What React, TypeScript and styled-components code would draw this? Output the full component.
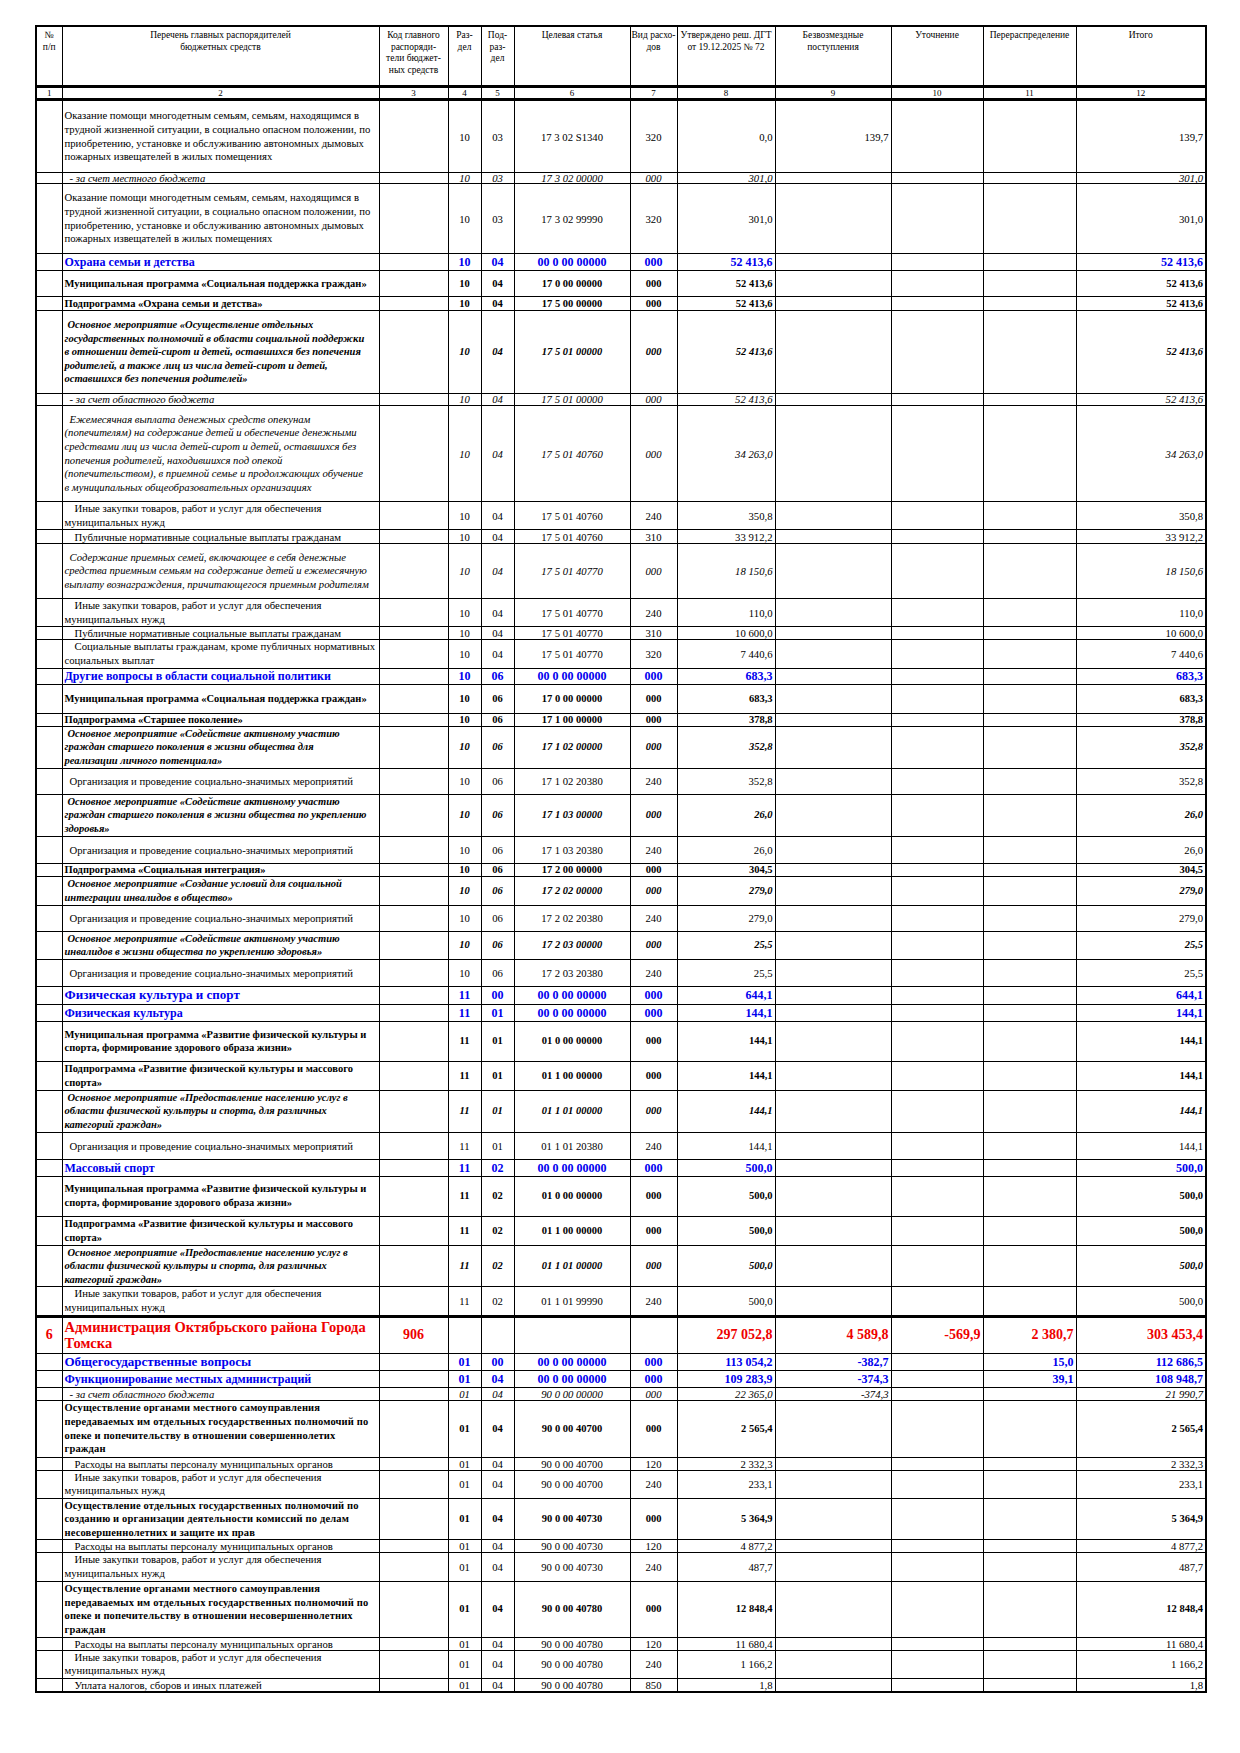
import React from "react";
import styled, { createGlobalStyle, css } from "styled-components";

const GlobalStyle = createGlobalStyle`
  html, body {
    margin: 0;
    padding: 0;
    background: #fff;
  }
  body {
    font-family: "Liberation Serif", "Times New Roman", serif;
    color: #000;
  }
`;

type Kind = "plain" | "italic" | "desc" | "bold" | "boldItalic" | "blue" | "red";

interface Row {
  kind: Kind;
  h: number;
  text: string[];
  indent?: number;
  size?: number;
  spaced?: boolean;
  num?: string;
  code?: string;
  c: [string, string, string, string];
  v: [string, string, string, string, string];
}

const COLS = [26, 317, 69, 33, 33, 116, 47, 98, 116, 92, 93, 130];

const HEAD = [
  ["№", "п/п"],
  ["Перечень главных распорядителей", "бюджетных средств"],
  ["Код главного", "распоряди-", "тели бюджет-", "ных средств"],
  ["Раз-", "дел"],
  ["Под-", "раз-", "дел"],
  ["Целевая статья"],
  ["Вид расхо-", "дов"],
  ["Утверждено реш. ДГТ", "от 19.12.2025 № 72"],
  ["Безвозмездные", "поступления"],
  ["Уточнение"],
  ["Перераспределение"],
  ["Итого"],
];

const helpLines = [
  "Оказание помощи многодетным семьям, семьям, находящимся в",
  "трудной жизненной ситуации, в социально опасном положении, по",
  "приобретению, установке и обслуживанию автономных дымовых",
  "пожарных извещателей в жилых помещениях",
];
const purchase = ["Иные закупки товаров, работ и услуг для обеспечения", "муниципальных нужд"];
const events = ["Организация и проведение социально-значимых мероприятий"];
const publicPay = ["Публичные нормативные социальные выплаты гражданам"];
const staff = ["Расходы на выплаты персоналу муниципальных органов"];
const sportProgram = [
  "Муниципальная программа «Развитие физической культуры и",
  "спорта, формирование здорового образа жизни»",
];
const sportSub = ["Подпрограмма «Развитие физической культуры и массового", "спорта»"];
const sportMain = [
  "Основное мероприятие «Предоставление населению услуг в",
  "области физической культуры и спорта, для различных",
  "категорий граждан»",
];
const guardLines = (who: string) => [
  "Осуществление органами местного самоуправления",
  "передаваемых им отдельных государственных полномочий по",
  `опеке и попечительству в отношении ${who}`,
  "граждан",
];

const mk = (
  kind: Kind,
  h: number,
  text: string[],
  c: [string, string, string, string],
  v8: string,
  extra: Partial<Row> = {}
): Row => ({
  kind,
  h,
  text,
  c,
  v: [v8, "", "", "", v8],
  ...extra,
});

const ROWS: Row[] = [
  mk("plain", 73, helpLines, ["10", "03", "17 3 02 S1340", "320"], "0,0", { v: ["0,0", "139,7", "", "", "139,7"] }),
  mk("italic", 11, ["- за счет местного бюджета"], ["10", "03", "17 3 02 00000", "000"], "301,0", { indent: 5 }),
  mk("plain", 70, helpLines, ["10", "03", "17 3 02 99990", "320"], "301,0"),
  mk("blue", 17, ["Охрана семьи и детства"], ["10", "04", "00 0 00 00000", "000"], "52 413,6"),
  mk("bold", 26, ["Муниципальная программа «Социальная поддержка граждан»"], ["10", "04", "17 0 00 00000", "000"], "52 413,6"),
  mk("bold", 14, ["Подпрограмма «Охрана семьи и детства»"], ["10", "04", "17 5 00 00000", "000"], "52 413,6"),
  mk(
    "boldItalic",
    83,
    [
      "Основное мероприятие «Осуществление отдельных",
      "государственных полномочий в области социальной поддержки",
      "в отношении детей-сирот и детей, оставшихся без попечения",
      "родителей, а также лиц из числа детей-сирот и детей,",
      "оставшихся без попечения родителей»",
    ],
    ["10", "04", "17 5 01 00000", "000"],
    "52 413,6",
    { indent: 3 }
  ),
  mk("italic", 12, ["- за счет областного бюджета"], ["10", "04", "17 5 01 00000", "000"], "52 413,6", { indent: 5 }),
  mk(
    "desc",
    96,
    [
      "Ежемесячная выплата денежных средств опекунам",
      "(попечителям) на содержание детей и обеспечение денежными",
      "средствами лиц из числа детей-сирот и детей, оставшихся без",
      "попечения родителей, находившихся под опекой",
      "(попечительством), в приемной семье и продолжающих обучение",
      "в муниципальных общеобразовательных организациях",
    ],
    ["10", "04", "17 5 01 40760", "000"],
    "34 263,0",
    { indent: 5 }
  ),
  mk("plain", 28, purchase, ["10", "04", "17 5 01 40760", "240"], "350,8", { indent: 10 }),
  mk("plain", 14, publicPay, ["10", "04", "17 5 01 40760", "310"], "33 912,2", { indent: 10 }),
  mk(
    "desc",
    55,
    [
      "Содержание приемных семей, включающее в себя денежные",
      "средства приемным семьям на содержание детей и ежемесячную",
      "выплату вознаграждения, причитающегося приемным родителям",
    ],
    ["10", "04", "17 5 01 40770", "000"],
    "18 150,6",
    { indent: 5 }
  ),
  mk("plain", 28, purchase, ["10", "04", "17 5 01 40770", "240"], "110,0", { indent: 10 }),
  mk("plain", 13, publicPay, ["10", "04", "17 5 01 40770", "310"], "10 600,0", { indent: 10 }),
  mk(
    "plain",
    28,
    ["Социальные выплаты гражданам, кроме публичных нормативных", "социальных выплат"],
    ["10", "04", "17 5 01 40770", "320"],
    "7 440,6",
    { indent: 10 }
  ),
  mk("blue", 16, ["Другие вопросы в области социальной политики"], ["10", "06", "00 0 00 00000", "000"], "683,3"),
  mk("bold", 29, ["Муниципальная программа «Социальная поддержка граждан»"], ["10", "06", "17 0 00 00000", "000"], "683,3"),
  mk("bold", 13, ["Подпрограмма «Старшее поколение»"], ["10", "06", "17 1 00 00000", "000"], "378,8"),
  mk(
    "boldItalic",
    42,
    [
      "Основное мероприятие «Содействие активному участию",
      "граждан старшего поколения в жизни общества для",
      "реализации личного потенциала»",
    ],
    ["10", "06", "17 1 02 00000", "000"],
    "352,8",
    { indent: 3 }
  ),
  mk("plain", 26, events, ["10", "06", "17 1 02 20380", "240"], "352,8", { indent: 5 }),
  mk(
    "boldItalic",
    42,
    [
      "Основное мероприятие «Содействие активному участию",
      "граждан старшего поколения в жизни общества по укреплению",
      "здоровья»",
    ],
    ["10", "06", "17 1 03 00000", "000"],
    "26,0",
    { indent: 3 }
  ),
  mk("plain", 27, events, ["10", "06", "17 1 03 20380", "240"], "26,0", { indent: 5 }),
  mk("bold", 13, ["Подпрограмма «Социальная интеграция»"], ["10", "06", "17 2 00 00000", "000"], "304,5"),
  mk(
    "boldItalic",
    29,
    ["Основное мероприятие «Создание условий для социальной", "интеграции инвалидов в общество»"],
    ["10", "06", "17 2 02 00000", "000"],
    "279,0",
    { indent: 3 }
  ),
  mk("plain", 26, events, ["10", "06", "17 2 02 20380", "240"], "279,0", { indent: 5 }),
  mk(
    "boldItalic",
    28,
    ["Основное мероприятие «Содействие активному участию", "инвалидов в жизни общества по укреплению здоровья»"],
    ["10", "06", "17 2 03 00000", "000"],
    "25,5",
    { indent: 3 }
  ),
  mk("plain", 27, events, ["10", "06", "17 2 03 20380", "240"], "25,5", { indent: 5 }),
  mk("blue", 18, ["Физическая культура и спорт"], ["11", "00", "00 0 00 00000", "000"], "644,1", { size: 13 }),
  mk("blue", 17, ["Физическая культура"], ["11", "01", "00 0 00 00000", "000"], "144,1"),
  mk("bold", 40, sportProgram, ["11", "01", "01 0 00 00000", "000"], "144,1"),
  mk("bold", 29, sportSub, ["11", "01", "01 1 00 00000", "000"], "144,1"),
  mk("boldItalic", 41, sportMain, ["11", "01", "01 1 01 00000", "000"], "144,1", { indent: 3 }),
  mk("plain", 27, events, ["11", "01", "01 1 01 20380", "240"], "144,1", { indent: 5 }),
  mk("blue", 17, ["Массовый спорт"], ["11", "02", "00 0 00 00000", "000"], "500,0"),
  mk("bold", 40, sportProgram, ["11", "02", "01 0 00 00000", "000"], "500,0"),
  mk("bold", 29, sportSub, ["11", "02", "01 1 00 00000", "000"], "500,0"),
  mk("boldItalic", 40, sportMain, ["11", "02", "01 1 01 00000", "000"], "500,0", { indent: 3 }),
  mk("plain", 28, purchase, ["11", "02", "01 1 01 99990", "240"], "500,0", { indent: 10 }),
  mk(
    "red",
    37,
    ["Администрация Октябрьского района Города", "Томска"],
    ["", "", "", ""],
    "297 052,8",
    { num: "6", code: "906", v: ["297 052,8", "4 589,8", "-569,9", "2 380,7", "303 453,4"] }
  ),
  mk("blue", 17, ["Общегосударственные вопросы"], ["01", "00", "00 0 00 00000", "000"], "113 054,2", {
    size: 13,
    v: ["113 054,2", "-382,7", "", "15,0", "112 686,5"],
  }),
  mk("blue", 17, ["Функционирование местных администраций"], ["01", "04", "00 0 00 00000", "000"], "109 283,9", {
    v: ["109 283,9", "-374,3", "", "39,1", "108 948,7"],
  }),
  mk("italic", 13, ["- за счет областного бюджета"], ["01", "04", "90 0 00 00000", "000"], "22 365,0", {
    indent: 5,
    v: ["22 365,0", "-374,3", "", "", "21 990,7"],
  }),
  mk("bold", 57, guardLines("совершеннолетих"), ["01", "04", "90 0 00 40700", "000"], "2 565,4", { spaced: true }),
  mk("plain", 13, staff, ["01", "04", "90 0 00 40700", "120"], "2 332,3", { indent: 10 }),
  mk("plain", 28, purchase, ["01", "04", "90 0 00 40700", "240"], "233,1", { indent: 10 }),
  mk(
    "bold",
    41,
    [
      "Осуществление отдельных государственных полномочий по",
      "созданию и организации деятельности комиссий по делам",
      "несовершеннолетних и защите их прав",
    ],
    ["01", "04", "90 0 00 40730", "000"],
    "5 364,9",
    { spaced: true }
  ),
  mk("plain", 13, staff, ["01", "04", "90 0 00 40730", "120"], "4 877,2", { indent: 10 }),
  mk("plain", 28, purchase, ["01", "04", "90 0 00 40730", "240"], "487,7", { indent: 10 }),
  mk("bold", 56, guardLines("несовершеннолетних"), ["01", "04", "90 0 00 40780", "000"], "12 848,4", { spaced: true }),
  mk("plain", 13, staff, ["01", "04", "90 0 00 40780", "120"], "11 680,4", { indent: 10 }),
  mk("plain", 28, purchase, ["01", "04", "90 0 00 40780", "240"], "1 166,2", { indent: 10 }),
  mk("plain", 13, ["Уплата налогов, сборов и иных платежей"], ["01", "04", "90 0 00 40780", "850"], "1,8", { indent: 10 }),
];

const Page = styled.div`
  width: 1240px;
  min-height: 1753px;
  box-sizing: border-box;
  padding: 25px 0 0 35px;
  background: #fff;
`;

const Sheet = styled.table`
  width: 1170px;
  border-collapse: collapse;
  table-layout: fixed;
  border: 2px solid #000;
`;

const HeadCell = styled.th`
  border: 1px solid #000;
  border-bottom: 3px solid #000;
  padding: 3px 1px 0;
  height: 55px;
  vertical-align: top;
  text-align: center;
  font-weight: normal;
  font-size: 9.5px;
  line-height: 11.5px;
`;

const IndexCell = styled.td`
  border: 1px solid #000;
  border-bottom: 3px solid #000;
  height: 10px;
  padding: 0;
  text-align: center;
  font-size: 9px;
  line-height: 10px;
`;

const kindStyle: Record<Kind, ReturnType<typeof css>> = {
  plain: css`
    font-size: 10.7px;
  `,
  italic: css`
    font-size: 10.7px;
    font-style: italic;
  `,
  desc: css`
    font-size: 10.7px;
    font-style: italic;
  `,
  bold: css`
    font-size: 10.5px;
    font-weight: bold;
  `,
  boldItalic: css`
    font-size: 10.5px;
    font-weight: bold;
    font-style: italic;
  `,
  blue: css`
    font-size: 12px;
    font-weight: bold;
    color: #0000ee;
  `,
  red: css`
    font-size: 14px;
    font-weight: bold;
    color: #ee0000;
    td {
      border-top: 3px solid #000;
    }
  `,
};

const Line = styled.tr<{ $h: number; $kind: Kind }>`
  height: ${(p) => p.$h}px;
  ${(p) => kindStyle[p.$kind]}
`;

const Cell = styled.td<{ $align?: "left" | "center" | "right"; $lh: number }>`
  border: 1px solid #000;
  padding: 0 2px;
  vertical-align: middle;
  text-align: ${(p) => p.$align ?? "center"};
  line-height: ${(p) => p.$lh}px;
  white-space: nowrap;
  overflow: hidden;
`;

const Title = styled(Cell)<{ $indent?: number; $size?: number; $kind: Kind; $spaced?: boolean }>`
  text-align: left;
  padding: 0 1px 0 2px;
  text-indent: ${(p) => p.$indent ?? 0}px;
  letter-spacing: ${(p) => (p.$spaced ? "0.15px" : "normal")};
  ${(p) =>
    p.$kind === "blue" &&
    css`
      font-size: ${p.$size ?? 12}px;
    `}
  ${(p) =>
    p.$kind === "red" &&
    css`
      font-size: 14.5px;
      line-height: 16px;
    `}
`;

const lines = (list: string[]) =>
  list.map((l, i) => (
    <React.Fragment key={i}>
      {i > 0 && <br />}
      {l}
    </React.Fragment>
  ));

export default function App() {
  return (
    <Page>
      <GlobalStyle />
      <Sheet>
        <colgroup>
          {COLS.map((w, i) => (
            <col key={i} style={{ width: w }} />
          ))}
        </colgroup>
        <thead>
          <tr>
            {HEAD.map((h, i) => (
              <HeadCell key={i}>{lines(h)}</HeadCell>
            ))}
          </tr>
          <tr>
            {COLS.map((_, i) => (
              <IndexCell key={i}>{i + 1}</IndexCell>
            ))}
          </tr>
        </thead>
        <tbody>
          {ROWS.map((r, i) => {
            const lh = Math.min(12, r.h - 1);
            const textLh = r.text.length === 1 ? lh : 13.6;
            return (
              <Line key={i} $h={r.h} $kind={r.kind}>
                <Cell $lh={lh}>{r.num ?? ""}</Cell>
                <Title $kind={r.kind} $indent={r.indent} $size={r.size} $spaced={r.spaced} $lh={textLh}>
                  {lines(r.text)}
                </Title>
                <Cell $lh={lh}>{r.code ?? ""}</Cell>
                {r.c.map((c, j) => (
                  <Cell key={j} $lh={lh}>
                    {c}
                  </Cell>
                ))}
                {r.v.map((v, j) => (
                  <Cell key={j} $align="right" $lh={lh}>
                    {v}
                  </Cell>
                ))}
              </Line>
            );
          })}
        </tbody>
      </Sheet>
    </Page>
  );
}
